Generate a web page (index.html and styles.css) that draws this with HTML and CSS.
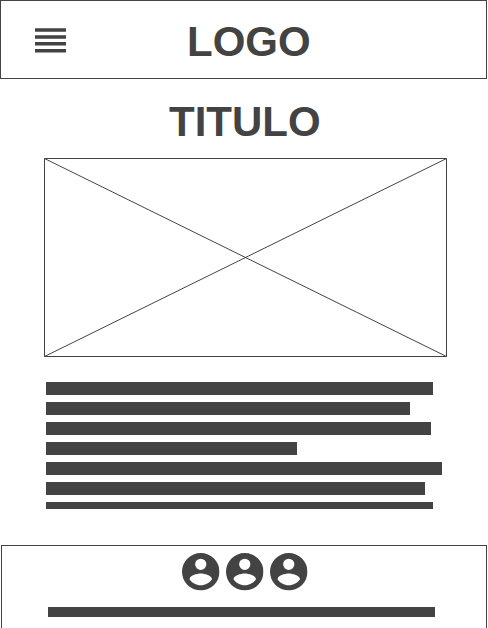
FILE: index.html
```html
<!DOCTYPE html>
<html lang="es">
<head>
<meta charset="utf-8">
<title>Wireframe</title>
<link rel="stylesheet" href="styles.css">
</head>
<body>
<svg class="defs" aria-hidden="true">
  <symbol id="account" viewBox="2 2 20 20">
    <path d="M12 19.2c-2.5 0-4.71-1.28-6-3.2.03-2 4-3.1 6-3.1s5.97 1.1 6 3.1c-1.29 1.92-3.5 3.2-6 3.2M12 5a3 3 0 0 1 3 3 3 3 0 0 1-3 3 3 3 0 0 1-3-3 3 3 0 0 1 3-3m0-3A10 10 0 0 0 2 12a10 10 0 0 0 10 10 10 10 0 0 0 10-10A10 10 0 0 0 12 2z"/>
  </symbol>
</svg>
<header class="header">
  <svg class="menu" viewBox="0 0 31 26">
    <path d="M0 1.35h31v3.5H0zM0 8.2h31v3.5H0zM0 15.1h31v3.5H0zM0 22h31v3.5H0z"/>
  </svg>
  <div class="logo">LOGO</div>
</header>
<main class="main">
  <h1 class="title">TITULO</h1>
  <svg class="picture" viewBox="0 0 403 199">
    <path d="M.5.5h402v198H.5zM.5.5l402 198M402.5.5l-402 198"/>
  </svg>
  <div class="text">
    <div class="line" style="width:387px"></div>
    <div class="line" style="width:364px"></div>
    <div class="line" style="width:385px"></div>
    <div class="line" style="width:251px"></div>
    <div class="line" style="width:396px"></div>
    <div class="line" style="width:379px"></div>
    <div class="line line-cut" style="width:387px"></div>
  </div>
</main>
<footer class="footer">
  <div class="social">
    <svg class="account"><use href="#account"/></svg>
    <svg class="account"><use href="#account"/></svg>
    <svg class="account"><use href="#account"/></svg>
  </div>
  <div class="footer-line"></div>
</footer>
</body>
</html>
```
FILE: styles.css
```css
* {
  box-sizing: border-box;
}

body {
  display: flex;
  flex-direction: column;
  width: 488px;
  height: 628px;
  margin: 0;
  overflow: hidden;
  background: #fff;
  color: #434343;
  font-family: "Liberation Sans", Arial, sans-serif;
}

svg {
  display: block;
  fill: #434343;
}

.defs {
  display: none;
}

.header {
  display: flex;
  align-items: flex-start;
  width: 487px;
  height: 79px;
  border: 1px solid #434343;
}

.menu {
  width: 31px;
  height: 26px;
  margin: 26px 0 0 34px;
}

.logo,
.title {
  font-size: 42px;
  font-weight: bold;
  line-height: 48px;
}

.logo {
  margin: 17px 0 0 121px;
}

.main {
  height: 466px;
  padding-left: 44px;
}

.title {
  margin: 19px 0 12px 125px;
}

.picture {
  width: 403px;
  height: 199px;
  fill: none;
  stroke: #434343;
  stroke-width: 1;
}

.text {
  display: flex;
  flex-direction: column;
  gap: 7px;
  margin: 25px 0 0 2px;
}

.line {
  height: 13px;
  background: #434343;
}

.line-cut {
  height: 7px;
}

.footer {
  flex: 1;
  width: 486px;
  margin-left: 1px;
  padding-top: 7px;
  border: 1px solid #434343;
  border-bottom: 0;
}

.social {
  display: flex;
  gap: 6.5px;
  margin-left: 180px;
}

.account {
  width: 37.5px;
  height: 37.5px;
}

.footer-line {
  width: 387px;
  height: 10px;
  margin: 16.5px 0 0 46px;
  background: #434343;
}
```
